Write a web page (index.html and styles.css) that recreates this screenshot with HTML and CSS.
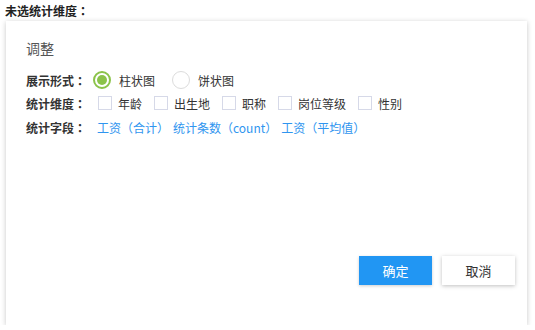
FILE: index.html
```html
<!DOCTYPE html>
<html lang="zh-TW">
<head>
    <meta charset="UTF-8">
    <title>统计维度</title>
    <link rel="stylesheet" href="styles.css">
</head>
<body>
    <div class="page-title">未选统计维度：</div>

    <div class="panel">
        <div class="panel-body">
            <div class="panel-title">调整</div>

            <div class="form-row">
                <span class="form-label">展示形式：</span>
                <label class="radio-item">
                    <span class="radio checked"></span>
                    <span>柱状图</span>
                </label>
                <label class="radio-item">
                    <span class="radio"></span>
                    <span>饼状图</span>
                </label>
            </div>

            <div class="form-row">
                <span class="form-label">统计维度：</span>
                <label class="check-item"><span class="checkbox"></span><span>年龄</span></label>
                <label class="check-item"><span class="checkbox"></span><span>出生地</span></label>
                <label class="check-item"><span class="checkbox"></span><span>职称</span></label>
                <label class="check-item"><span class="checkbox"></span><span>岗位等级</span></label>
                <label class="check-item"><span class="checkbox"></span><span>性别</span></label>
            </div>

            <div class="form-row">
                <span class="form-label">统计字段：</span>
                <a class="field-link" href="#">工资（合计）</a>
                <a class="field-link" href="#">统计条数（count）</a>
                <a class="field-link" href="#">工资（平均值）</a>
            </div>
        </div>

        <div class="panel-footer">
            <button class="btn btn-primary">确定</button>
            <button class="btn btn-default">取消</button>
        </div>
    </div>
</body>
</html>
```

FILE: styles.css
```css
body {
    margin: 0;
    background-color: #ffffff;
    font-family: "Noto Sans CJK TC", "Noto Sans CJK SC", "Noto Sans", sans-serif;
    font-size: 12px;
    color: #333333;
}

.page-title {
    padding: 2px 5px 0;
    height: 19px;
    line-height: 17px;
    font-weight: bold;
    color: #222222;
}

.panel {
    margin-left: 6px;
    width: 521px;
    height: 304px;
    background-color: #ffffff;
    box-shadow: 0 1px 5px rgba(0, 0, 0, 0.22);
    display: flex;
    flex-direction: column;
}

.panel-body {
    padding: 16px 20px 0;
}

.panel-title {
    font-size: 14px;
    color: #555555;
    line-height: 22px;
    margin-bottom: 10px;
}

.form-row {
    display: flex;
    align-items: center;
    height: 22px;
    margin-bottom: 1px;
}

.form-row:last-child {
    margin-top: 2px;
}

.form-label {
    width: 67px;
    font-weight: bold;
    color: #333333;
}

.radio-item {
    display: flex;
    align-items: center;
    margin-right: 17px;
    color: #333333;
}

.radio {
    box-sizing: border-box;
    width: 18px;
    height: 18px;
    border-radius: 50%;
    border: 1px solid #dcdcdc;
    margin-right: 8px;
    position: relative;
}

.radio.checked {
    border: 2px solid #8bc34a;
}

.radio.checked::after {
    content: "";
    position: absolute;
    left: 2px;
    top: 2px;
    width: 10px;
    height: 10px;
    border-radius: 50%;
    background-color: #8bc34a;
}

.check-item {
    display: flex;
    align-items: center;
    margin-right: 12px;
    color: #333333;
}

.check-item:first-of-type {
    margin-left: 5px;
}

.checkbox {
    box-sizing: border-box;
    width: 14px;
    height: 14px;
    border: 1px solid #d6d9e8;
    margin-right: 6px;
}

.field-link {
    color: #2f95ef;
    text-decoration: none;
    margin-right: 3px;
    margin-left: 1px;
}

.field-link:first-of-type {
    margin-left: 4px;
}

.panel-footer {
    margin-top: auto;
    display: flex;
    justify-content: flex-end;
    gap: 10px;
    padding: 0 12px 40px 0;
}

.btn {
    width: 73px;
    height: 29px;
    border: none;
    font-family: inherit;
    font-size: 13px;
    cursor: pointer;
}

.btn-primary {
    background-color: #2196f3;
    color: #ffffff;
    box-shadow: 0 1px 3px rgba(0, 0, 0, 0.2);
}

.btn-default {
    background-color: #ffffff;
    color: #333333;
    box-shadow: 0 1px 4px rgba(0, 0, 0, 0.25);
}
```
